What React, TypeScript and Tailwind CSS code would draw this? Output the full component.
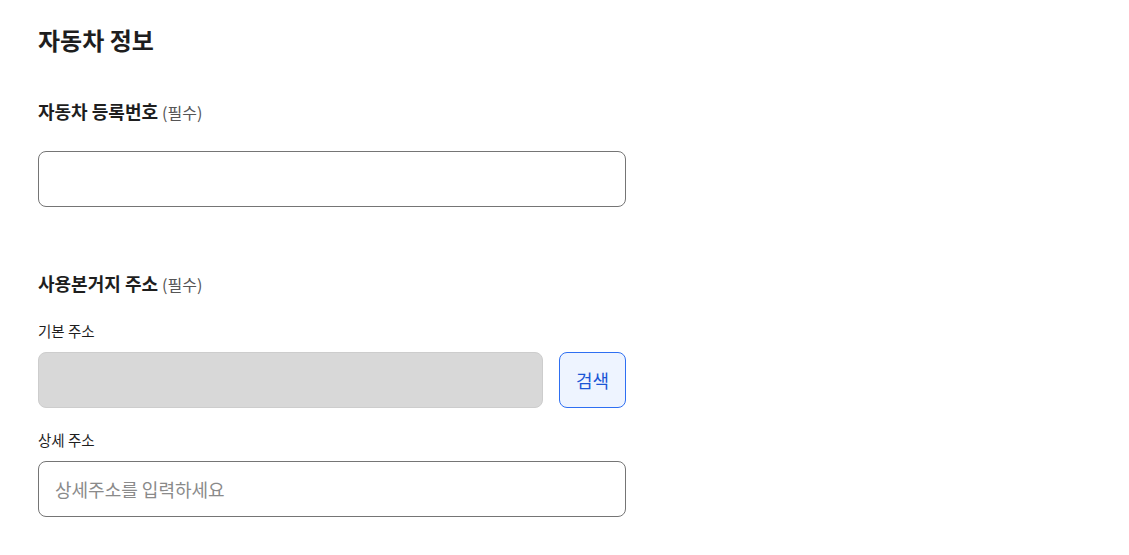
export default function App() {
  return (
    <div className="min-h-screen bg-white font-['Noto_Sans_CJK_KR','Noto_Sans',sans-serif] text-[#1e1e1e]">
      <div className="w-[664px] px-[38px] pt-[22px]">
        <h1 className="text-[24px] font-bold leading-[36px]">자동차 정보</h1>

        {/* 자동차 등록번호 */}
        <section className="mt-[40px]">
          <h2 className="text-[18px] font-bold leading-[27px]">
            자동차 등록번호 <span className="text-[16px] font-normal text-[#555]">(필수)</span>
          </h2>
          <input
            type="text"
            className="mt-[25px] block h-[56px] w-full rounded-[8px] border border-[#757575] px-4 text-[18px] outline-none"
          />
        </section>

        {/* 사용본거지 주소 */}
        <section className="mt-[63px]">
          <h2 className="text-[18px] font-bold leading-[27px]">
            사용본거지 주소 <span className="text-[16px] font-normal text-[#555]">(필수)</span>
          </h2>
          <div className="mt-[23px] text-[14.5px] leading-[20px]">기본 주소</div>
          <div className="mt-[11px] flex gap-4">
            <input
              type="text"
              disabled
              className="h-[56px] flex-1 rounded-[8px] border border-[#cdcdcd] bg-[#d8d8d8] px-4 outline-none"
            />
            <button className="h-[56px] w-[67px] rounded-[8px] border border-[#2e6ff2] bg-[#eef4ff] text-[18px] text-[#1a56d6]">
              검색
            </button>
          </div>
          <div className="mt-[22px] text-[14.5px] leading-[20px]">상세 주소</div>
          <input
            type="text"
            placeholder="상세주소를 입력하세요"
            className="mt-[11px] block h-[56px] w-full rounded-[8px] border border-[#757575] px-4 text-[18px] outline-none placeholder:text-[#8a8a8a]"
          />
        </section>
      </div>
    </div>
  );
}
